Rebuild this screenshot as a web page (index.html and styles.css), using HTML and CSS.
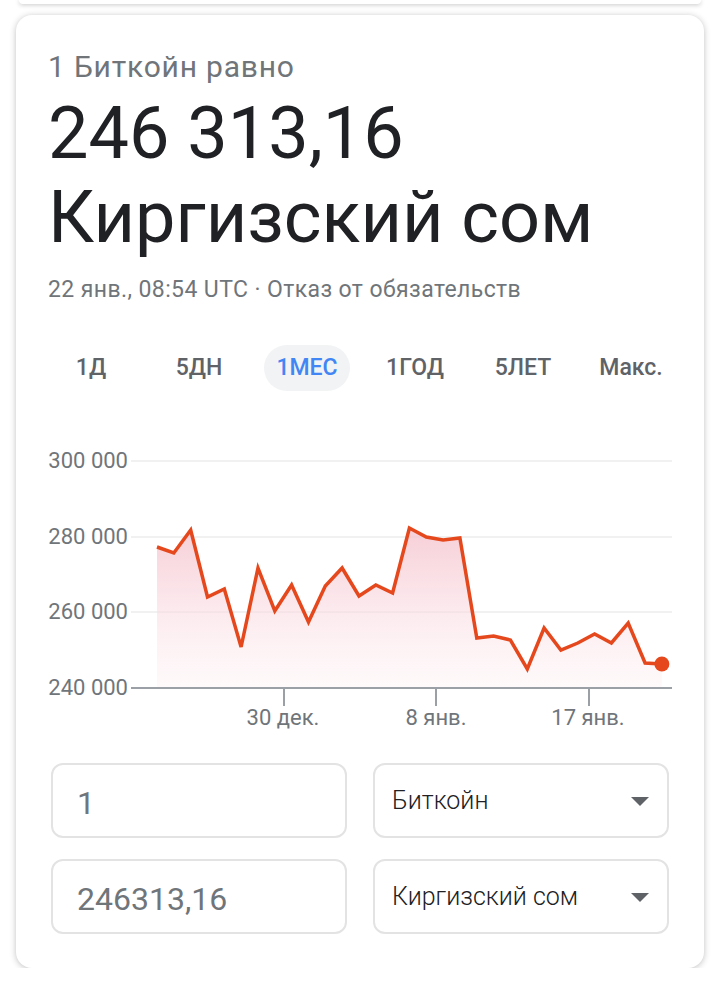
FILE: index.html
```html
<!DOCTYPE html>
<html>
  <head>
    <meta charset="utf-8">
    <title>Биткойн – Киргизский сом</title>
    <link rel="stylesheet" href="styles.css">
  </head>
  <body>
    <div class="prev-card"></div>

    <div class="card">
      <div class="header">
        <div class="label">1 Биткойн равно</div>
        <div class="result">
          <span>246 313,16</span>
          <span>Киргизский сом</span>
        </div>
        <div class="meta">22 янв., 08:54 UTC · <span class="disclaimer">Отказ от обязательств</span></div>
      </div>

      <div class="tabs">
        <div class="tab"><span>1Д</span></div>
        <div class="tab"><span>5ДН</span></div>
        <div class="tab active"><span>1МЕС</span></div>
        <div class="tab"><span>1ГОД</span></div>
        <div class="tab"><span>5ЛЕТ</span></div>
        <div class="tab"><span>Макс.</span></div>
      </div>

      <div class="chart">
        <svg id="chart" width="688" height="340" viewBox="16 400 688 340">
          <defs>
            <linearGradient id="area" gradientUnits="userSpaceOnUse" x1="0" y1="525" x2="0" y2="688">
              <stop offset="0" stop-color="#f5c4cf" stop-opacity="0.85"/>
              <stop offset="1" stop-color="#fdecef" stop-opacity="0.3"/>
            </linearGradient>
          </defs>
          <g class="grid">
            <line x1="131" y1="461" x2="672" y2="461"/>
            <line x1="131" y1="537" x2="672" y2="537"/>
            <line x1="131" y1="612" x2="672" y2="612"/>
          </g>
          <g class="y-labels">
            <text x="128" y="468">300 000</text>
            <text x="128" y="544">280 000</text>
            <text x="128" y="619">260 000</text>
            <text x="128" y="695">240 000</text>
          </g>
          <path id="area-path" fill="url(#area)"/>
          <path id="line-path" class="line"/>
          <circle id="last-dot" r="7.5" fill="#e5481c"/>
          <g class="axis">
            <line x1="131" y1="688" x2="672" y2="688"/>
            <line x1="284" y1="688" x2="284" y2="706"/>
            <line x1="436" y1="688" x2="436" y2="706"/>
            <line x1="589" y1="688" x2="589" y2="706"/>
          </g>
          <g class="x-labels">
            <text x="283" y="725">30 дек.</text>
            <text x="436" y="725">8 янв.</text>
            <text x="588" y="725">17 янв.</text>
          </g>
        </svg>
      </div>

      <div class="converter">
        <div class="field amount">1</div>
        <div class="field select">Биткойн<span class="arrow"></span></div>
        <div class="field amount">246313,16</div>
        <div class="field select">Киргизский сом<span class="arrow"></span></div>
      </div>
    </div>

    <script>
      // daily closes, already in chart pixels (y = 688 is 240 000, 461 is 300 000)
      const ys = [547, 553, 530, 597, 589, 647, 568, 611, 585, 622, 586, 568, 596, 585, 593, 528,
                  537, 540, 538, 638, 636, 640, 669, 628, 650, 643, 634, 643, 623, 663, 664];
      const x0 = 157;
      const step = 16.83;

      let line = '';
      ys.forEach((y, i) => {
        line += (i ? ' L' : 'M') + (x0 + i * step).toFixed(1) + ' ' + y;
      });
      const xEnd = x0 + (ys.length - 1) * step;

      document.getElementById('line-path').setAttribute('d', line);
      document.getElementById('area-path').setAttribute('d', line + ' L' + xEnd.toFixed(1) + ' 688 L' + x0 + ' 688 Z');

      const dot = document.getElementById('last-dot');
      dot.setAttribute('cx', xEnd.toFixed(1));
      dot.setAttribute('cy', ys[ys.length - 1]);
    </script>
  </body>
</html>
```

FILE: styles.css
```css
body {
  margin: 0;
  background: #fff;
  font-family: Roboto, "Noto Sans", Arial, sans-serif;
  color: #202124;
}

.prev-card {
  height: 4px;
  margin: 0 19px;
  background: #fff;
  border-radius: 0 0 12px 12px;
  box-shadow: 0 1px 4px rgba(32, 33, 36, 0.25);
}

.card {
  width: 688px;
  margin: 11px 0 0 16px;
  padding: 35px 0 34px;
  background: #fff;
  border-radius: 16px;
  box-shadow: 0 1px 6px rgba(32, 33, 36, 0.28);
}

.header {
  padding: 0 32px;
}

.label {
  font-size: 30px;
  line-height: 34px;
  letter-spacing: 0.8px;
  color: #70757a;
}

.result {
  margin-top: 8px;
  font-size: 72px;
  line-height: 84px;
  color: #202124;
}

.result span {
  display: block;
}

.meta {
  margin-top: 16px;
  font-size: 23px;
  line-height: 28px;
  letter-spacing: 0.4px;
  color: #70757a;
}

.tabs {
  display: grid;
  grid-template-columns: repeat(6, 1fr);
  margin-top: 41px;
  padding: 0 19px 0 21px;
}

.tab {
  text-align: center;
}

.tab span {
  display: inline-block;
  height: 46px;
  padding: 0 12px;
  border-radius: 23px;
  font-size: 23px;
  font-weight: 500;
  line-height: 46px;
  color: #5f6368;
}

.tab.active span {
  background: #f1f3f4;
  color: #4285f4;
}

.chart {
  margin-top: 9px;
  height: 340px;
}

.chart svg {
  display: block;
}

.grid line {
  stroke: #f1f1f1;
  stroke-width: 2;
}

.axis line {
  stroke: #9aa0a6;
  stroke-width: 2;
}

.line {
  fill: none;
  stroke: #e5481c;
  stroke-width: 3.5;
  stroke-linejoin: miter;
}

.y-labels text,
.x-labels text {
  font-family: Roboto, Arial, sans-serif;
  font-size: 22px;
  fill: #70757a;
}

.y-labels text {
  text-anchor: end;
}

.x-labels text {
  text-anchor: middle;
}

.converter {
  display: grid;
  grid-template-columns: 1fr 1fr;
  column-gap: 26px;
  row-gap: 21px;
  margin-top: 23px;
  padding: 0 35px;
}

.field {
  position: relative;
  height: 75px;
  border: 2px solid #e3e3e3;
  border-radius: 12px;
  box-sizing: border-box;
  display: flex;
  align-items: center;
}

.amount {
  padding-left: 24px;
  padding-top: 4px;
  font-size: 32px;
  color: #70757a;
}

.select {
  padding-left: 17px;
  font-size: 25px;
  font-weight: 300;
  color: #202124;
}

.arrow {
  position: absolute;
  right: 18px;
  top: 32px;
  width: 0;
  height: 0;
  border-left: 9px solid transparent;
  border-right: 9px solid transparent;
  border-top: 9px solid #5f6368;
}
```
